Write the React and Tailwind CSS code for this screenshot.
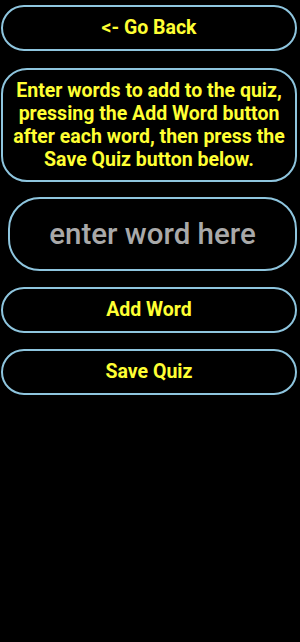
import React, { useState } from 'react';

const btn = "w-full h-[46px] rounded-[23px] border-2 border-[#8ec5de] bg-black text-[#ffff33] font-bold text-[19.5px] leading-none flex items-center justify-center";

const App = () => {
    const [word, setWord] = useState('');

    return (
        <div className="w-[300px] min-h-[642px] bg-black font-['Roboto',sans-serif] pt-[5px] pl-[1px] pr-[3px]">
            <button className={btn}>&lt;- Go Back</button>

            {/* Instructions */}
            <div className="mt-[17px] rounded-[26px] border-2 border-[#8ec5de] px-[2px] py-[9px] text-center text-[#ffff33] font-bold text-[19.5px] leading-[23px]">
                Enter words to add to the quiz, pressing the Add Word button after each word, then press the Save Quiz button below.
            </div>

            <div className="mt-[15px] pl-[7px]">
                <input
                    type="text"
                    placeholder="enter word here"
                    value={word}
                    onChange={(e) => setWord(e.target.value)}
                    className="w-full h-[74px] rounded-[32px] border-2 border-[#8ec5de] bg-black text-center text-[29.5px] font-medium text-[#a9a9a9] placeholder:text-[#a9a9a9] outline-none font-['Roboto',sans-serif]"
                />
            </div>

            <button className={btn + " mt-[16px]"}>Add Word</button>
            <button className={btn + " mt-[16px]"}>Save Quiz</button>
        </div>
    );
};

export default App;
